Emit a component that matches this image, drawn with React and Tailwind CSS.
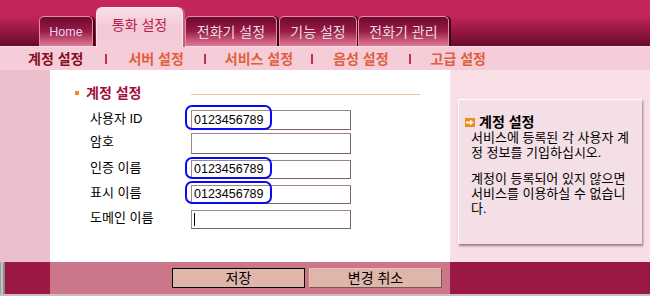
import React from "react";

const FONT = "font-['Liberation_Sans','Noto_Sans_CJK_KR',sans-serif]";

function Tab({ w, children, ml, active }) {
  if (active) {
    return (
      <div
        className={`${ml} w-[87px] h-[40px] -mb-px relative z-10 rounded-t-[6px] border border-b-0 border-[#fbe6ee] bg-gradient-to-b from-[#f9dde6] via-[#f4c9d6] to-[#f5ccd8] shadow-[2px_0_0_#c0607e] flex items-center justify-center pb-[6px]`}
      >
        <span className="text-[14px] leading-none text-[#b3204c]">{children}</span>
      </div>
    );
  }
  return (
    <div
      className={`${ml} ${w} h-[30px] rounded-t-[5px] border border-b-0 border-[#e98aa8] bg-gradient-to-b from-[#6c0a2c] via-[#9a1a48] to-[#e27a9a] shadow-[2px_0_0_#3e0214] flex items-center justify-center pt-[1px]`}
    >
      {children}
    </div>
  );
}

function Row({ label, value, mt, h, oval, cursor }) {
  return (
    <div className={`flex items-center ${mt}`}>
      <div className="w-[141px] pl-[40px] mb-[4px] text-[13px] leading-none text-black whitespace-nowrap">{label}</div>
      <div className={`relative w-[160px] ${h} border border-[#9e8882] border-b-[#7c6460] border-r-[#7c6460] bg-white flex items-center pl-[2px]`}>
        <span className="text-[12.5px] leading-none text-black font-['Liberation_Sans',sans-serif]">{value}</span>
        {cursor && <span className="w-px h-[13px] bg-black" />}
        {oval && <div className={`absolute ${oval} border-2 border-[#0a0af5] rounded-[7px]`} />}
      </div>
    </div>
  );
}

export default function App() {
  return (
    <div className={`w-[650px] h-[296px] overflow-hidden ${FONT}`}>
      {/* header */}
      <div className="h-[46px] bg-gradient-to-b from-[#c4255a] from-35% to-[#6a0a2e] flex items-end pl-[39px]">
        <Tab w="w-[54px]" ml="">
          <span className="text-[12.5px] leading-none text-[#e6d6f2] font-['Liberation_Sans',sans-serif]">Home</span>
        </Tab>
        <Tab active ml="ml-[3px]">통화 설정</Tab>
        <Tab w="w-[92px]" ml="ml-[2px]">
          <span className="text-[14px] leading-none text-[#e4dde0]">전화기 설정</span>
        </Tab>
        <Tab w="w-[78px]" ml="ml-[2px]">
          <span className="text-[14px] leading-none text-[#e4dde0]">기능 설정</span>
        </Tab>
        <Tab w="w-[91px]" ml="ml-[1px]">
          <span className="text-[14px] leading-none text-[#e4dde0]">전화기 관리</span>
        </Tab>
      </div>

      {/* sub nav */}
      <div className="h-[24px] bg-[#f5cdd8] border-t border-[#f8dce4] flex items-center pl-[28px] text-[14px] font-bold leading-none">
        <span className="text-[#8a0c22]">계정 설정</span>
        <span className="ml-[22px] w-[2px] h-[10px] bg-[#c52a58]" />
        <span className="ml-[21px] text-[#df5f3e]">서버 설정</span>
        <span className="ml-[20px] w-[2px] h-[10px] bg-[#c52a58]" />
        <span className="ml-[19px] text-[#df5f3e]">서비스 설정</span>
        <span className="ml-[18px] w-[2px] h-[10px] bg-[#c52a58]" />
        <span className="ml-[20px] text-[#df5f3e]">음성 설정</span>
        <span className="ml-[20px] w-[2px] h-[10px] bg-[#c52a58]" />
        <span className="ml-[20px] text-[#df5f3e]">고급 설정</span>
      </div>

      {/* main */}
      <div className="h-[192px] flex">
        <div className="w-[50px] bg-[#ecbfcd]" />
        <div className="w-[400px] bg-white flex flex-col">
          <div className="mt-[15px] h-[16px] flex items-center pl-[25px] pr-[30px]">
            <span className="w-[4px] h-[4px] bg-[#f28a12]" />
            <span className="ml-[7px] text-[14px] font-bold leading-none text-[#a3103e]">계정 설정</span>
            <span className="ml-auto w-[229px] h-px bg-[#f2bca8] mt-[3px]" />
          </div>
          <Row label="사용자 ID" value="0123456789" mt="mt-[9px]" h="h-[20px]" oval="-left-[7px] -top-[6px] w-[87px] h-[25px]" />
          <Row label="암호" value="" mt="mt-[3px]" h="h-[21px]" />
          <Row label="인증 이름" value="0123456789" mt="mt-[6px]" h="h-[19px]" oval="-left-[7px] -top-[4px] w-[87px] h-[22px]" />
          <Row label="표시 이름" value="0123456789" mt="mt-[6px]" h="h-[19px]" oval="-left-[7px] -top-[5px] w-[87px] h-[23px]" />
          <Row label="도메인 이름" value="" mt="mt-[6px]" h="h-[19px]" cursor />
        </div>
        <div className="w-[200px] bg-[#f7dfe5] pl-[8px] pt-[29px]">
          <div className="w-[184px] h-[145px] bg-[#f3dfe5] border-t border-l border-white shadow-[1px_2px_2px_rgba(110,70,85,0.65)] pt-[15px] pl-[6px] text-[13px] leading-[15px] text-black whitespace-nowrap">
            <div className="flex items-center">
              <span className="w-[10px] h-[9px] bg-[#f08a1a] flex items-center justify-center">
                <svg width="8" height="7" viewBox="0 0 8 7">
                  <path d="M0 2.5h4V0.5L7.5 3.5 4 6.5V4.5H0z" fill="#fff" />
                </svg>
              </span>
              <span className="ml-[4px] font-bold text-[14px]">계정 설정</span>
            </div>
            <div className="pl-[6px]">
              서비스에 등록된 각 사용자 계<br />
              정 정보를 기입하십시오.
            </div>
            <div className="pl-[6px] mt-[11px]">
              계정이 등록되어 있지 않으면<br />
              서비스를 이용하실 수 없습니<br />
              다.
            </div>
          </div>
        </div>
      </div>

      {/* bottom */}
      <div className="h-[32px] flex">
        <div className="w-[50px] bg-[#9b1845] flex">
          <div className="w-[5px] h-full bg-[#c6c6c6] border-l border-[#9a9a9a] border-r-2 border-r-[#8a8a8a]" />
        </div>
        <div className="w-[400px] bg-[#cb7689] flex items-start pt-[6px] pl-[122px] gap-[4px]">
          <div className="w-[133px] h-[20px] bg-[#e0b6aa] border border-black flex items-center justify-center text-[14px] leading-none text-black">
            저장
          </div>
          <div className="w-[133px] h-[20px] bg-[#e0b6aa] border border-[#e6c2b8] border-b-[#6e5a58] border-r-[#6e5a58] flex items-center justify-center text-[14px] leading-none text-black">
            변경 취소
          </div>
        </div>
        <div className="w-[200px] bg-[#9b1845]" />
      </div>
      <div className="h-[2px] bg-[#c9bcc2]" />
    </div>
  );
}
